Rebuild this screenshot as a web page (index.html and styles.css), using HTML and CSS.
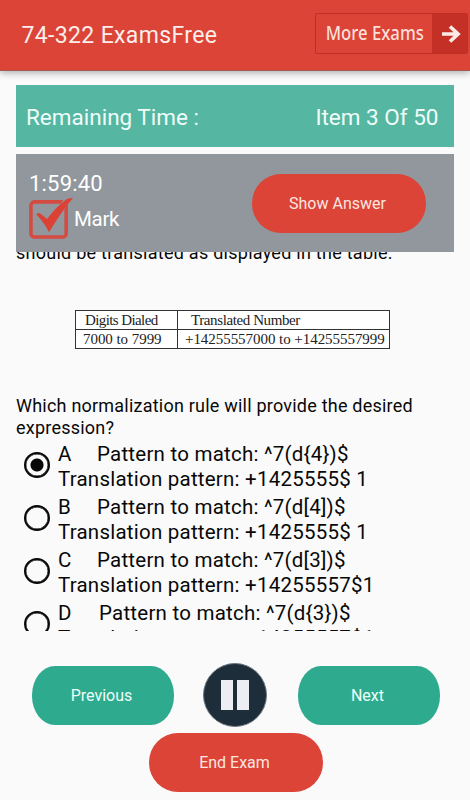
FILE: index.html
```html
<!DOCTYPE html>
<html lang="en">
<head>
<meta charset="utf-8">
<title>74-322 ExamsFree</title>
<link rel="stylesheet" href="styles.css">
</head>
<body>
<header class="app-bar">
  <h1 class="app-title">74-322 ExamsFree</h1>
  <a class="more"><span class="more-label">More Exams</span><span class="more-arrow"><svg width="20" height="18" viewBox="0 0 20 18"><path d="M1 9H17M9 1.500L17 9L9 16.500" fill="none" stroke="#fbeae6" stroke-width="3.700"/></svg></span></a>
</header>
<section class="banner"><span class="remaining">Remaining Time :</span><span class="item">Item 3 Of 50</span></section>
<section class="panel">
  <div class="status">
    <div class="time">1:59:40</div>
    <div class="mark"><svg width="45" height="44" viewBox="0 0 46 44"><rect x="2" y="4.500" width="36" height="36" rx="3.500" fill="none" stroke="#d44b41" stroke-width="3.600"/><path d="M36 1H46L41 6L34 13.500L30 10Z" fill="#91979d"/><path d="M7.500 17.500Q9 14.500 12 17L18.500 22Q27 10 38 2Q41 .5 45 .5Q34 13 20.500 35.500Q15 25 7.500 17.500Z" fill="#dc4136"/></svg><span class="mark-label">Mark</span></div>
  </div>
  <button class="button red show">Show Answer</button>
</section>
<main class="content">
  <p class="question intro">should be translated as displayed in the table.</p>
  <table class="digits">
    <tr><td class="dial head">Digits Dialed</td><td class="trans head">Translated Number</td></tr>
    <tr><td class="dial">7000 to 7999</td><td class="trans">+14255557000 to +14255557999</td></tr>
  </table>
  <p class="question">Which normalization rule will provide the desired<br>expression?</p>
  <div class="options">
    <label class="option"><span class="radio checked"></span><span><span class="letter">A</span>Pattern to match: ^7(d{4})$<br>Translation pattern: +1425555$ 1</span></label>
    <label class="option"><span class="radio"></span><span><span class="letter">B</span>Pattern to match: ^7(d[4])$<br>Translation pattern: +1425555$ 1</span></label>
    <label class="option"><span class="radio"></span><span><span class="letter">C</span>Pattern to match: ^7(d[3])$<br>Translation pattern: +14255557$1</span></label>
    <label class="option"><span class="radio"></span><span><span class="letter wide">D</span>Pattern to match: ^7(d{3})$<br>Translation pattern: +14255557$1</span></label>
  </div>
</main>
<footer class="controls">
  <div class="nav">
    <button class="button green">Previous</button>
    <button class="pause" aria-label="Pause"><svg width="28" height="30" viewBox="0 0 28 30"><path d="M0 0H12V30H0ZM16 0H28V30H16Z" fill="#eceef3"/></svg></button>
    <button class="button green">Next</button>
  </div>
  <button class="button red end">End Exam</button>
</footer>
</body>
</html>
```
FILE: styles.css
```css
* { box-sizing: border-box; }
body {
  margin: 0;
  width: 470px;
  height: 800px;
  overflow: hidden;
  background: #fafafa;
  font-family: Roboto, sans-serif;
  color: #080808;
}
span { white-space: pre; }
.app-bar {
  height: 71px;
  background: #db4437;
  border-bottom: 1px solid #a05c54;
  box-shadow: 0 2px 7px rgba(0, 0, 0, .3);
  display: flex;
  justify-content: space-between;
  padding: 13px 2px 0 21.500px;
}
.app-title {
  margin: 0;
  font-size: 23px;
  font-weight: 400;
  line-height: 46px;
  letter-spacing: .35px;
  color: #fceeea;
}
.more {
  width: 153px;
  height: 41px;
  border: 1px solid #bf2f25;
  border-radius: 2px;
  display: flex;
}
.more-label {
  width: 116px;
  flex: none;
  padding-left: 11px;
  font: 500 19px/39px "Noto Sans", sans-serif;
  color: #fbdfd9;
  transform: scaleX(.88);
  transform-origin: 0 0;
}
.more-arrow {
  width: 35px;
  flex: none;
  padding-left: 2px;
  background: #c53026;
  display: flex;
  align-items: center;
  justify-content: center;
}
.banner {
  margin: 14px 16.500px 0 16px;
  height: 62px;
  padding: 0 15px 0 10px;
  background: #55b6a2;
  color: #effdf9;
  font-size: 22.500px;
  line-height: 64px;
  display: flex;
  justify-content: space-between;
}
.panel {
  margin: 7px 16.500px 0 16px;
  height: 98px;
  padding: 17px 27.500px 0 13px;
  background: #91979d;
  display: flex;
  justify-content: space-between;
}
.time { color: #fff; font-size: 22px; line-height: 26px; letter-spacing: .2px; }
.mark { display: flex; }
.mark-label { color: #fff; font-size: 20.500px; line-height: 44px; letter-spacing: -.3px; }
.button {
  border: 0;
  padding: 0 3px 0 0;
  height: 59px;
  font: 400 16px/59px Roboto, sans-serif;
}
.red { width: 174px; border-radius: 29px; background: #db4437; color: #fbe6e0; }
.green { width: 142px; border-radius: 23px / 29px; background: #2eaa8e; color: #edfffa; }
.show { margin-top: 3px; }
.content { height: 379px; overflow: hidden; padding: 0 16px; }
.question { margin: 0; font-size: 18px; line-height: 21.500px; letter-spacing: .22px; white-space: nowrap; }
.intro { margin-top: -10px; height: 21px; letter-spacing: .26px; }
.digits {
  margin: 47px 0 46px 59px;
  width: 315px;
  border-collapse: collapse;
  table-layout: fixed;
  background: #fff;
  font-family: "Liberation Serif", serif;
  font-size: 15px;
  color: #222;
}
.digits td { border: 1px solid #333; height: 19px; padding: 1px 0 0 7px; line-height: 17px; white-space: nowrap; letter-spacing: -.05px; }
.digits .dial { width: 102px; }
.digits .head { padding-left: 9px; letter-spacing: -.6px; }
.digits .trans.head { padding-left: 13px; letter-spacing: -.4px; }
.options { padding: 4px 0 0 8px; }
.option { display: flex; height: 53px; font-size: 20.500px; line-height: 25px; letter-spacing: .23px; }
.radio {
  flex: none;
  width: 26px;
  height: 26px;
  margin: 10px 8px 0 0;
  border: 2px solid #080808;
  border-radius: 50%;
  box-shadow: inset 0 0 0 .4px #080808;
}
.checked { background: radial-gradient(circle, #080808 6px, transparent 7px); }
.letter { display: inline-block; width: 39px; }
.wide { width: 41px; }
.controls { padding-top: 32px; }
.nav { display: flex; align-items: flex-start; gap: 29px; padding-left: 32px; height: 67px; }
.nav .green { margin-top: 3px; }
.nav .pause + .green { margin-left: 2px; }
.pause {
  width: 64px;
  height: 64px;
  padding: 0 1px 0 0;
  border: 1.500px solid #6d7880;
  border-radius: 50%;
  background: #1e2d3a;
  display: flex;
  align-items: center;
  justify-content: center;
}
.end { display: block; margin: 3px auto 0 149px; }
```
